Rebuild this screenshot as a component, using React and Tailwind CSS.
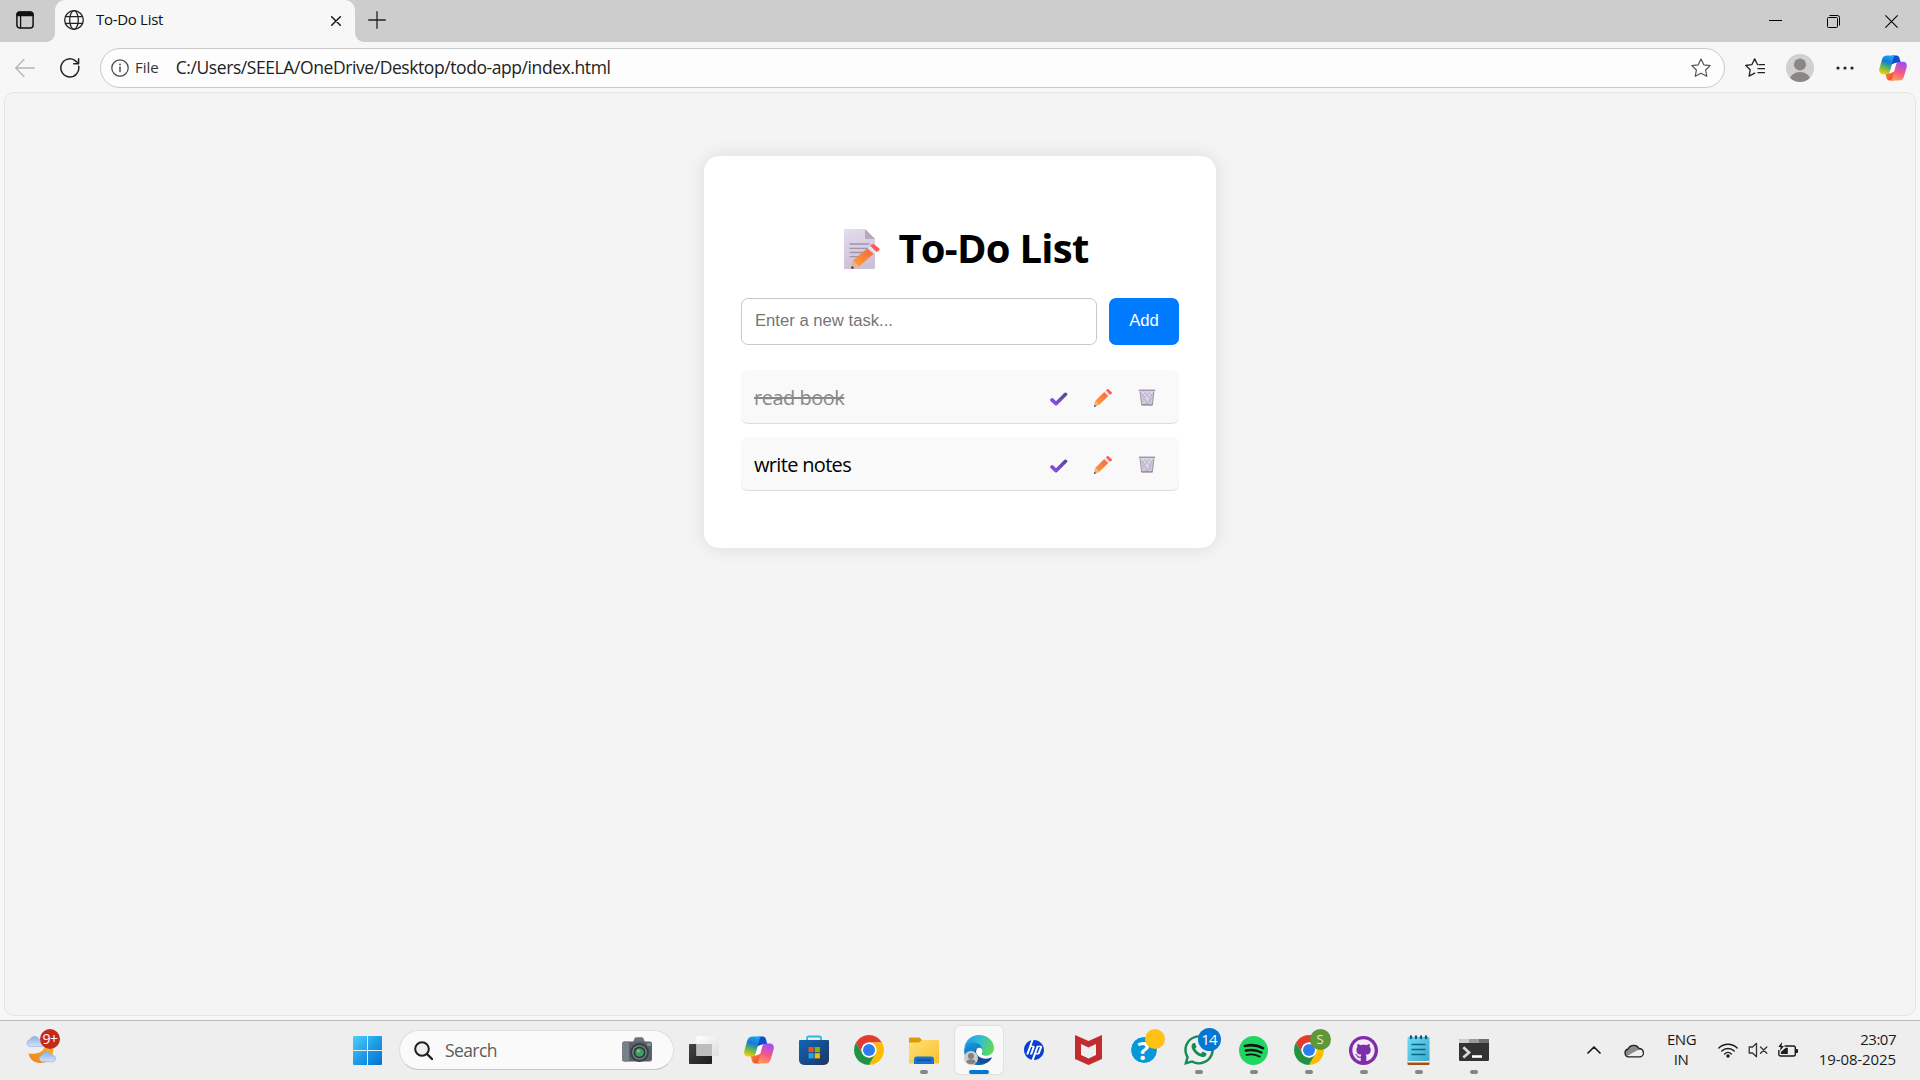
import React, { useState } from "react";
import { FaWhatsapp, FaGithub } from "react-icons/fa";
import { SiHp } from "react-icons/si";

/* ---------- Browser chrome icons ---------- */

const stroke = {
  fill: "none",
  stroke: "currentColor",
  strokeLinecap: "round",
  strokeLinejoin: "round",
};

function WorkspaceIcon() {
  return (
    <svg className="h-[18px] w-[18px]" viewBox="0 0 18 18">
      <rect x="0.9" y="1" width="16.2" height="16" rx="3" fill="none" stroke="#111" strokeWidth="1.5" />
      <path d="M0.5 5.2V4a3.4 3.4 0 0 1 3.4-3.4h10.2A3.4 3.4 0 0 1 17.5 4v1.2z" fill="#111" />
      <path d="M4.6 5v12" stroke="#111" strokeWidth="1.3" />
    </svg>
  );
}

function GlobeIcon() {
  return (
    <svg className="h-5 w-5 text-[#222]" viewBox="0 0 20 20" {...stroke} strokeWidth="1.3">
      <circle cx="10" cy="10" r="9.3" />
      <ellipse cx="10" cy="10" rx="4.3" ry="9.3" />
      <path d="M1.5 6.7h17M1.5 13.3h17" />
    </svg>
  );
}

function StarPath({ cut }) {
  return cut ? (
    <path d="M12.6 6.7 9.7.9 6.8 6.7.7 7.5l4.5 4.3-1.1 6.3 5.6-3" />
  ) : (
    <path d="M10 1l2.8 5.8 6.4.8-4.6 4.4 1.2 6.3L10 15.2l-5.8 3.1 1.2-6.3L.8 7.6l6.4-.8z" />
  );
}

function CopilotIcon({ id, className }) {
  const half =
    "M8.6.5H18c-1.2.3-2 1.2-2.4 2.6L12 16.6c-.8 2.9-2.3 4-4.6 4H4.2C.7 20.6-.4 17.9.4 14.5L3.3 4.6C4.2 1.7 5.9.5 8.6.5z";
  const fold = "M14.2.5h4.600c1.800 0 2.600.9 3.200 2.900l1.500 5h-3.700c-2 0-3 .2-4.300 1l-3 1z";
  return (
    <svg className={className} viewBox="0 0 30 28">
      <defs>
        <linearGradient id={id + "a"} x1="0.6" y1="0" x2="0.3" y2="1">
          <stop offset="0" stopColor="#17a5f3" />
          <stop offset="0.35" stopColor="#1878d8" />
          <stop offset="0.62" stopColor="#52b45f" />
          <stop offset="1" stopColor="#ffcb00" />
        </linearGradient>
        <linearGradient id={id + "b"} x1="0.4" y1="1" x2="0.7" y2="0">
          <stop offset="0" stopColor="#ff9c55" />
          <stop offset="0.45" stopColor="#f2568b" />
          <stop offset="1" stopColor="#9d50f5" />
        </linearGradient>
        <linearGradient id={id + "c"} x1="0" y1="0" x2="1" y2="0.5">
          <stop offset="0" stopColor="#1b3fc0" />
          <stop offset="1" stopColor="#0a56cf" />
        </linearGradient>
        <linearGradient id={id + "d"} x1="0" y1="0" x2="1" y2="1">
          <stop offset="0" stopColor="#e8402c" />
          <stop offset="1" stopColor="#ff8a3c" />
        </linearGradient>
      </defs>
      <path d="M14.500 8.500h5l-4 11h-5z" fill="#fff" />
      <path d={fold} fill={`url(#${id}c)`} />
      <g transform="rotate(180 15 14)">
        <path d={fold} fill={`url(#${id}d)`} />
      </g>
      <path d={half} fill={`url(#${id}a)`} />
      <path
        d="M21.400 27.500H12c1.200-.3 2-1.200 2.400-2.600L18 11.400c.8-2.900 2.300-4 4.600-4h3.200c3.500 0 4.600 2.700 3.800 6.100l-2.900 9.900c-.9 2.900-2.600 4.100-5.300 4.100z"
        fill={`url(#${id}b)`}
      />
    </svg>
  );
}

/* ---------- To-do app icons ---------- */

function PencilShape() {
  return (
    <>
      <path d="M1 12 5 16 .9 17.700c-.5.200-.9-.2-.7-.7z" fill="#e8b08c" />
      <path d="M.5 15.800l1.500 1.500-1.300.500c-.4.100-.7-.1-.6-.5z" fill="#4a2340" />
      <path d="M1.100 11.900 10.300 3l4 4-9.200 9z" fill="url(#pencilBody)" />
      <path d="M10.300 3 12 1.300l4 4-1.700 1.700z" fill="#e9dcf0" />
      <path d="M12 1.300 13 .4c.5-.5 1.100-.5 1.600 0l2.900 2.700c.5.500.5 1.100 0 1.600l-1.500 1.100z" fill="#fa5a50" />
    </>
  );
}

function PencilDefs() {
  return (
    <defs>
      <linearGradient id="pencilBody" x1="0" y1="1" x2="1" y2="0">
        <stop offset="0" stopColor="#ffa03c" />
        <stop offset="1" stopColor="#f8653e" />
      </linearGradient>
    </defs>
  );
}

function MemoIcon() {
  return (
    <svg className="mt-0.5 h-10 w-9" viewBox="0 0 36 40">
      <PencilDefs />
      <defs>
        <linearGradient id="paper" x1="0" y1="0" x2="0.2" y2="1">
          <stop offset="0" stopColor="#e4dbec" />
          <stop offset="1" stopColor="#cdc1d8" />
        </linearGradient>
      </defs>
      <path d="M1 0h20l10 10v29a1 1 0 0 1-1 1H1a1 1 0 0 1-1-1V1a1 1 0 0 1 1-1z" fill="url(#paper)" />
      <path d="M21 0l10 10h-9a1 1 0 0 1-1-1z" fill="#b5abb9" />
      <path d="M5.500 15h20M5.500 19.300h20M5.500 23.500h16M5.500 27.700h11" stroke="#a195a8" strokeWidth="1.300" />
      <g transform="translate(7 15) scale(1.600 1.390)">
        <PencilShape />
      </g>
    </svg>
  );
}

function CheckIcon() {
  return (
    <svg className="mt-[3px] h-[14px] w-[18px]" viewBox="0 0 18 14">
      <defs>
        <linearGradient id="check" x1="0" y1="1" x2="1" y2="0">
          <stop offset="0" stopColor="#8a4be8" />
          <stop offset="1" stopColor="#5b4a93" />
        </linearGradient>
      </defs>
      <path
        d="M2 7.900 6 11.700 15.500 2.300"
        fill="none"
        stroke="url(#check)"
        strokeWidth="3.600"
        strokeLinecap="round"
        strokeLinejoin="round"
      />
    </svg>
  );
}

function PencilIcon() {
  return (
    <svg className="h-[18px] w-[18px]" viewBox="0 0 18 18">
      <PencilDefs />
      <PencilShape />
    </svg>
  );
}

function TrashIcon() {
  return (
    <svg className="h-[17px] w-[18px]" viewBox="0 0 18 17">
      <path d="M2 3h14l-1.700 13.500H3.700z" fill="#dcd6e6" />
      <path
        d="M3 4l3.500 4-2 4 3.500 4M7 3.500 4 8l5 6-2 2M7 3.500l5 6-3 6M11 3.500 6.500 9l4 6.500M11 3.500l3.500 4.500-3 5 2 3M15 4l-3.500 5.500 2 4"
        fill="none"
        stroke="#b3abc1"
        strokeWidth="0.800"
      />
      <path d="M2.200 3 3.700 16M15.800 3l-1.500 13" stroke="#a39bb0" strokeWidth="1.200" />
      <path d="M3.500 15.900h11" stroke="#8f879c" strokeWidth="1.400" />
      <rect x="0.700" y="0.400" width="16.600" height="2.200" rx="0.600" fill="#b3adc0" />
      <path d="M1 1.400h16" stroke="#938ca2" strokeWidth="0.700" />
    </svg>
  );
}

/* ---------- Taskbar icons ---------- */

function WeatherIcon() {
  return (
    <svg className="h-[30px] w-8" viewBox="0 0 32 30">
      <defs>
        <linearGradient id="cloud" x1="0" y1="0" x2="0" y2="1">
          <stop offset="0" stopColor="#8fb0e6" />
          <stop offset="1" stopColor="#d4e2f8" />
        </linearGradient>
        <linearGradient id="moon" x1="0" y1="1" x2="1" y2="0">
          <stop offset="0" stopColor="#f07e1a" />
          <stop offset="1" stopColor="#f5b52e" />
        </linearGradient>
      </defs>
      <path d="M2.500 18.500c8 1 15-1 16-7l8.500 1c1.500 8-4 15.500-13 15.500-6 0-10.500-4-11.500-9.500z" fill="url(#moon)" />
      <path
        d="M3.500 11.500a3.500 3.500 0 0 1 .4-6.800 5 5 0 0 1 9.300-.3c3.300 0 5 2 5 4 0 1.900-1.300 3.100-3 3.100z"
        fill="url(#cloud)"
        stroke="#8aaae0"
        strokeWidth="0.600"
      />
      <path
        d="M15.500 26.700a3.400 3.400 0 0 1 .3-6.500 4.700 4.700 0 0 1 8.800-.4c3.100.100 5 1.600 5 3.700 0 1.800-1.300 3.200-3 3.200z"
        fill="url(#cloud)"
        stroke="#8aaae0"
        strokeWidth="0.600"
      />
    </svg>
  );
}

function WindowsIcon() {
  return (
    <svg className="h-[29px] w-[29px]" viewBox="0 0 29 29">
      <defs>
        <linearGradient id="win" gradientUnits="userSpaceOnUse" x1="0" y1="0" x2="29" y2="29">
          <stop offset="0" stopColor="#4fd0fd" />
          <stop offset="0.500" stopColor="#1f9ce8" />
          <stop offset="1" stopColor="#0072d0" />
        </linearGradient>
      </defs>
      <path
        d="M1 0h13v14H0V1a1 1 0 0 1 1-1zM15 0h13a1 1 0 0 1 1 1v13H15zM0 15h14v14H1a1 1 0 0 1-1-1zM15 15h14v13a1 1 0 0 1-1 1H15z"
        fill="url(#win)"
      />
    </svg>
  );
}

function CameraIcon() {
  return (
    <svg className="h-[26px] w-[30px]" viewBox="0 0 30 26">
      <path d="M11 5l1.500-3.500C13 .5 14 .3 15 .3h4c1 0 2 .2 2.500 1.200L23 5z" fill="#6b737b" />
      <rect x="0" y="4.500" width="30" height="20" rx="2.500" fill="#59616a" />
      <path d="M2.500 4.500H7v20H2.500A2.500 2.500 0 0 1 0 22V7a2.500 2.500 0 0 1 2.500-2.500z" fill="#78818a" />
      <rect x="25" y="6" width="4" height="3" rx="1" fill="#8a939b" />
      <circle cx="17.500" cy="15.500" r="9.500" fill="#3a4047" />
      <circle cx="17.500" cy="15.500" r="7.300" fill="#7d868d" />
      <circle cx="17.500" cy="15.500" r="6" fill="#2c3637" />
      <circle cx="17.500" cy="15.500" r="4.300" fill="#3f9d66" />
      <circle cx="16.300" cy="14" r="1.500" fill="#7cc796" />
    </svg>
  );
}

function TaskViewIcon() {
  return (
    <svg className="h-7 w-[30px]" viewBox="0 0 30 28">
      <defs>
        <linearGradient id="tvDark" x1="0" y1="0" x2="1" y2="1">
          <stop offset="0" stopColor="#444" />
          <stop offset="1" stopColor="#1c1c1c" />
        </linearGradient>
        <linearGradient id="tvLight" x1="0" y1="0" x2="1" y2="1">
          <stop offset="0" stopColor="#fff" />
          <stop offset="1" stopColor="#dedede" />
        </linearGradient>
      </defs>
      <rect x="0" y="8" width="23" height="20" rx="0.800" fill="url(#tvDark)" />
      <rect x="7.500" y="0.300" width="22.200" height="19.700" rx="0.800" fill="url(#tvLight)" />
      <path d="M7.500 8H23v12H7.500z" fill="#bdbdbd" />
    </svg>
  );
}

function StoreIcon() {
  return (
    <svg className="h-[30px] w-[30px]" viewBox="0 0 30 30">
      <defs>
        <linearGradient id="store" x1="0" y1="0" x2="1" y2="1">
          <stop offset="0" stopColor="#0f66b8" />
          <stop offset="1" stopColor="#1f355e" />
        </linearGradient>
      </defs>
      <path d="M8 6V3.200A1.700 1.700 0 0 1 9.700 1.500h10.600A1.700 1.700 0 0 1 22 3.200V6" fill="none" stroke="#27b8ef" strokeWidth="1.800" />
      <path d="M1 5h28a1 1 0 0 1 1 1v19a5 5 0 0 1-5 5H5a5 5 0 0 1-5-5V6a1 1 0 0 1 1-1z" fill="url(#store)" />
      <path d="M9.500 12h5.200v5.200H9.500z" fill="#f25022" />
      <path d="M15.700 12h5.200v5.200h-5.200z" fill="#7fba00" />
      <path d="M9.500 18.200h5.200v5.200H9.500z" fill="#11a9f0" />
      <path d="M15.700 18.200h5.200v5.200h-5.200z" fill="#ffb900" />
    </svg>
  );
}

function ChromeIcon() {
  return (
    <svg className="h-[30px] w-[30px]" viewBox="0 0 24 24">
      <path d="M12 6H22.390A12 12 0 0 0 1.610 6L6.800 15A6 6 0 0 1 12 6z" fill="#e33b2e" />
      <path d="M17.200 15 12 24A12 12 0 0 0 22.390 6H12A6 6 0 0 1 17.200 15z" fill="#fdbd00" />
      <path d="M6.800 15 1.610 6A12 12 0 0 0 12 24L17.200 15A6 6 0 0 1 6.800 15z" fill="#229342" />
      <circle cx="12" cy="12" r="6" fill="#fff" />
      <circle cx="12" cy="12" r="4.800" fill="#2f7cf0" />
    </svg>
  );
}

function ExplorerIcon() {
  return (
    <svg className="h-[27px] w-[30px]" viewBox="0 0 30 27">
      <defs>
        <linearGradient id="folder" x1="0" y1="0" x2="1" y2="1">
          <stop offset="0" stopColor="#ffe07a" />
          <stop offset="1" stopColor="#fbbf2a" />
        </linearGradient>
      </defs>
      <path d="M1 .5h9.500L13 3v5H0V1.500a1 1 0 0 1 1-1z" fill="#dd9a05" />
      <path d="M0 5.500h10L13 3h16a1 1 0 0 1 1 1v22.500H0z" fill="url(#folder)" />
      <path d="M5 27v-4.500a3 3 0 0 1 3-3h14a3 3 0 0 1 3 3V27z" fill="#1173cf" />
      <path d="M8.500 23.200h13" stroke="#0a4a94" strokeWidth="1.200" strokeLinecap="round" />
    </svg>
  );
}

function EdgeIcon() {
  return (
    <svg className="h-[30px] w-[30px]" viewBox="0 0 30 30">
      <defs>
        <linearGradient id="edgeTop" x1="0" y1="0.300" x2="1" y2="0.600">
          <stop offset="0" stopColor="#1f9fdc" />
          <stop offset="0.450" stopColor="#30bdd6" />
          <stop offset="1" stopColor="#62dc4f" />
        </linearGradient>
        <linearGradient id="edgeLeft" x1="0.300" y1="0" x2="0.700" y2="1">
          <stop offset="0" stopColor="#1a94df" />
          <stop offset="1" stopColor="#0d5cab" />
        </linearGradient>
      </defs>
      <path
        d="M.3 12.500C1.700 5 7.600 0 15 0c8.700 0 15 6.200 15 13 0 4.900-3.700 7.700-7.700 7.700-3.500 0-5.400-1.200-4.700-2.500.8-1.200 1-3.700-.8-5.700-4.300-4.700-12-5-16.500 0z"
        fill="url(#edgeTop)"
      />
      <path
        d="M.1 15.500C.3 10.500 4.300 7.200 9.300 7.200c5 0 9 3.600 9.100 8-1.200-3.400-5.700-3.700-6.200 2-.5 6.300 4 11.300 9.500 11.200C12 33 0 27.500.1 15.500z"
        fill="url(#edgeLeft)"
      />
      <path
        d="M11.800 14c-2.600 8.500 3.500 15.800 9.700 14.600 2.900-1.200 5-3.100 6.200-5.300.3-.5-.1-.9-.6-.7C19 26 11.300 21.500 12.300 15z"
        fill="#124c92"
      />
      <path d="M12.200 17c-.3-4 3.500-5.400 5.300-3.300 1.200 1.500.9 3.500 0 4.700-.6 1.300.8 2.600 3.500 2.800-4.500 1.500-8.500-1-8.800-4.200z" fill="#fff" />
    </svg>
  );
}

function McAfeeIcon() {
  return (
    <svg className="h-[30px] w-[27px]" viewBox="0 0 27 30">
      <path
        d="M0 0l13.500 6L27 0v24l-13.500 6L0 24zm6 9v11l7.500 3.500L21 20V9l-7.500 3.500z"
        fill="#c22c2f"
        fillRule="evenodd"
      />
    </svg>
  );
}

function HelpIcon() {
  return (
    <div className="relative flex h-7 w-7 items-center justify-center rounded-full border border-white bg-[#0a97d8]">
      <span className="text-[25px] leading-none font-bold text-white">?</span>
      <span className="absolute -top-[8px] left-[14px] h-5 w-5 rounded-full bg-[#ffc114]" />
    </div>
  );
}

function SpotifyIcon() {
  return (
    <svg className="h-[29px] w-[29px]" viewBox="0 0 29 29">
      <circle cx="14.500" cy="14.500" r="14.500" fill="#1ed760" />
      <g fill="none" stroke="#111" strokeLinecap="round">
        <path d="M6 10c6-1.400 12.500-.8 18 2.100" strokeWidth="2.700" />
        <path d="M6.700 14.600c5.500-1.200 11-.6 15.800 1.900" strokeWidth="2.300" />
        <path d="M7.400 18.900c4.800-1 9.300-.4 13.300 1.700" strokeWidth="1.900" />
      </g>
    </svg>
  );
}

function NotepadIcon() {
  return (
    <svg className="h-[30px] w-[23px]" viewBox="0 0 23 30">
      <defs>
        <linearGradient id="note" x1="0" y1="0" x2="1" y2="1">
          <stop offset="0" stopColor="#6fdcf5" />
          <stop offset="1" stopColor="#3ba9cb" />
        </linearGradient>
      </defs>
      <rect x="0.500" y="25" width="22" height="5" rx="1" fill="#a34f10" />
      <rect x="0.500" y="24" width="22" height="3.500" fill="#fff" />
      <rect x="0.500" y="2" width="22" height="24" rx="1" fill="url(#note)" />
      <path d="M4 1.500v1.500M9 1.500v1.500M14 1.500v1.500M19 1.500v1.500" stroke="#0b5d7d" strokeWidth="2.400" strokeLinecap="round" />
      <path d="M4.500 9.500h14M4.500 14.500h14M4.500 19.500h14" stroke="#0b6587" strokeWidth="1.500" />
    </svg>
  );
}

function TerminalIcon() {
  return (
    <svg className="h-[22px] w-[30px]" viewBox="0 0 30 22">
      <rect width="30" height="22" rx="1.200" fill="#333" />
      <path d="M1.200 0H10v4H0V1.200A1.200 1.200 0 0 1 1.200 0z" fill="#cfcfcf" />
      <path d="M10 0h10v4H10z" fill="#9b9b9b" />
      <path d="M20 0h8.800A1.200 1.200 0 0 1 30 1.200V4H20z" fill="#6f6f6f" />
      <path d="M4.300 8.300 10 13.500l-5.700 5" fill="none" stroke="#d6d6d6" strokeWidth="2.800" />
      <path d="M13 17.500h10" stroke="#fff" strokeWidth="2.600" />
    </svg>
  );
}

function WifiIcon() {
  return (
    <svg className="h-4 w-5 text-[#1b1b1b]" viewBox="0 0 20 16" {...stroke} strokeWidth="1.400">
      <path d="M.8 6a13 13 0 0 1 18.400 0M3.800 9a8.800 8.800 0 0 1 12.400 0M6.700 11.900a4.700 4.700 0 0 1 6.600 0" />
      <circle cx="10" cy="14" r="1.700" fill="currentColor" stroke="none" />
    </svg>
  );
}

function MutedIcon() {
  return (
    <svg className="h-4 w-5 text-[#333]" viewBox="0 0 20 16" {...stroke} strokeWidth="1.300">
      <path d="M8.500 1.300 4.500 5H1.200v6h3.300l4 3.700z" />
      <path d="M12.500 5l6.300 6.300M18.800 5l-6.300 6.300" />
    </svg>
  );
}

function BatteryIcon() {
  return (
    <svg className="h-4 w-5" viewBox="0 0 20 16">
      <path
        d="M6.500 4h9A1.800 1.800 0 0 1 17.300 5.800v6.400a1.800 1.800 0 0 1-1.800 1.800h-13A1.800 1.800 0 0 1 .8 12.200V8"
        fill="none"
        stroke="#1b1b1b"
        strokeWidth="1.400"
      />
      <path d="M18 7h1a1 1 0 0 1 1 1v2a1 1 0 0 1-1 1h-1z" fill="#1b1b1b" />
      <path d="M2.800 12V10l5-4.200h2V12z" fill="#1b1b1b" />
      <path d="M4 0 .3 5h2.300L2 9l4-5H3.600z" fill="#1b1b1b" />
    </svg>
  );
}

function CloudIcon() {
  return (
    <svg className="h-[15px] w-5" viewBox="0 0 20 15">
      <path d="M4.700 13.900A4 4 0 0 1 4.200 6 6 6 0 0 1 15 5.500a4.200 4.200 0 0 1 .5 8.400z" fill="#8c8c8c" />
      <path d="M3 13l10-5.500c4-2 6.300.5 6 3.500-.3 2-1.500 2.900-3.500 2.900H5z" fill="#efefef" />
      <path
        d="M4.700 13.900A4 4 0 0 1 4.200 6 6 6 0 0 1 15 5.500a4.200 4.200 0 0 1 .5 8.400z"
        fill="none"
        stroke="#222"
        strokeWidth="1.300"
      />
    </svg>
  );
}

/* ---------- Sections ---------- */

function TabStrip() {
  return (
    <div className="flex h-[42px] bg-[#f7f7f7]">
      <div className="flex w-[55px] rounded-br-[9px] bg-[#cdcdcd] pt-[11px] pl-4">
        <WorkspaceIcon />
      </div>
      <div className="w-[300px] bg-[#cdcdcd]">
        <div className="flex h-[42px] items-center rounded-t-[10px] bg-[#f7f7f7] pr-[14px] pb-0.5 pl-[9px]">
          <GlobeIcon />
          <span className="ml-3 pb-0.5 text-[15px] tracking-[-0.300px] text-[#111]">To-Do List</span>
          <svg className="mt-px ml-auto h-2.5 w-2.5 text-[#111]" viewBox="0 0 10 10" {...stroke} strokeWidth="1.400">
            <path d="M.7.700l8.600 8.600M9.300.700.7 9.300" />
          </svg>
        </div>
      </div>
      <div className="flex flex-1 items-center rounded-bl-[9px] bg-[#cdcdcd] pr-[22px] pb-0.5 pl-[13px]">
        <svg className="h-[18px] w-[18px] text-[#222]" viewBox="0 0 18 18" {...stroke} strokeWidth="1.300">
          <path d="M9 .7v16.600M.700 9h16.600" />
        </svg>
        <div className="ml-auto flex items-center gap-[45px] pt-[3px] text-black">
          <svg className="h-[13px] w-[13px]" viewBox="0 0 13 13">
            <path d="M0 5.500h13" stroke="currentColor" />
          </svg>
          <svg className="h-[13px] w-[13px]" viewBox="0 0 13 13" fill="none" stroke="currentColor">
            <rect x="0.500" y="2.500" width="10" height="10" rx="1" />
            <path d="M2.500.500h8a2 2 0 0 1 2 2v8" />
          </svg>
          <svg className="h-[13px] w-[13px]" viewBox="0 0 13 13">
            <path d="M.4.400l12.200 12.200M12.600.400.4 12.600" stroke="currentColor" strokeWidth="1.100" />
          </svg>
        </div>
      </div>
    </div>
  );
}

function Toolbar() {
  return (
    <div className="flex h-[50px] items-center bg-[#f7f7f7] pt-[1px] pr-[13px] pl-[15px]">
      <svg className="h-5 w-5 text-[#b5b5b5]" viewBox="0 0 20 20" {...stroke} strokeWidth="1.300">
        <path d="M19.300 10H.8M9 1.500.7 10 9 18.500" />
      </svg>
      <svg className="ml-[25px] h-5 w-5 text-[#222]" viewBox="0 0 20 20" {...stroke} strokeWidth="1.500">
        <path d="M18.700 8.300A9 9 0 1 1 14.800 2.400L18.600 5.500M18.600.8v4.900h-4.900" />
      </svg>
      <div className="ml-5 flex h-10 w-[1625px] items-center rounded-full border border-[#c9c9c9] bg-[#fdfdfd] pr-[13px] pl-[10px]">
        <svg className="h-[18px] w-[18px] text-[#444]" viewBox="0 0 18 18" {...stroke} strokeWidth="1.200">
          <circle cx="9" cy="9" r="8.200" />
          <path d="M9 8.300v4.200" strokeWidth="1.400" />
          <circle cx="9" cy="5.500" r="0.900" fill="currentColor" stroke="none" />
        </svg>
        <span className="ml-1.5 text-[15px] text-[#333]">File</span>
        <span className="ml-[17px] text-[17.500px] tracking-[-0.420px] text-[#222]">
          C:/Users/SEELA/OneDrive/Desktop/todo-app/index.html
        </span>
        <svg className="ml-auto h-5 w-5 text-[#555]" viewBox="0 0 20 20" {...stroke} strokeWidth="1.200">
          <StarPath />
        </svg>
      </div>
      <svg className="ml-5 h-5 w-5 text-[#222]" viewBox="0 0 20 20" {...stroke} strokeWidth="1.300">
        <StarPath cut />
        <path d="M14 6.700h5.500M13 10.700h6.500M13 14.700h6.500" />
      </svg>
      <svg className="ml-[21px] h-7 w-7" viewBox="0 0 28 28">
        <defs>
          <clipPath id="avatar">
            <circle cx="14" cy="14" r="14" />
          </clipPath>
        </defs>
        <g clipPath="url(#avatar)">
          <rect width="28" height="28" fill="#d2d0ce" />
          <circle cx="14" cy="10.500" r="6" fill="#8a8886" />
          <ellipse cx="14" cy="26.500" rx="10.500" ry="8.500" fill="#8a8886" />
        </g>
      </svg>
      <svg className="ml-[22px] h-1 w-[18px] text-[#222]" viewBox="0 0 18 4" fill="currentColor">
        <circle cx="2" cy="2" r="1.600" />
        <circle cx="9" cy="2" r="1.600" />
        <circle cx="16" cy="2" r="1.600" />
      </svg>
      <CopilotIcon id="copTop" className="ml-auto h-[26px] w-7" />
    </div>
  );
}

function TaskRow({ task, onToggle, onDelete }) {
  return (
    <li className="flex h-[54px] items-center rounded-[7px] border-b border-[#dcdcdc] bg-[#f9f9f9] pt-[2px] pr-[23px] pl-[13px]">
      <span
        className={
          task.done
            ? "mr-auto text-[20px] tracking-[-0.500px] text-[#888] line-through decoration-2"
            : "mr-auto text-[20px] tracking-[-0.680px] text-black"
        }
      >
        {task.text}
      </span>
      <div className="flex items-center gap-[26px]">
        <button onClick={onToggle}>
          <CheckIcon />
        </button>
        <button>
          <PencilIcon />
        </button>
        <button onClick={onDelete}>
          <TrashIcon />
        </button>
      </div>
    </li>
  );
}

function TodoCard() {
  const [tasks, setTasks] = useState([
    { id: 1, text: "read book", done: true },
    { id: 2, text: "write notes", done: false },
  ]);
  const toggle = (id) => setTasks(tasks.map((t) => (t.id === id ? { ...t, done: !t.done } : t)));
  const remove = (id) => setTasks(tasks.filter((t) => t.id !== id));
  return (
    <section className="mx-auto mt-[63px] h-[392px] w-[512px] rounded-[15px] bg-white px-[37px] pt-[65px] shadow-[0_0_19px_rgba(0,0,0,0.100)]">
      <h1 className="flex h-[54px] items-center justify-center pl-[13px] text-[40px] font-bold tracking-[-0.750px] text-black">
        <MemoIcon />
        <span className="ml-[18px]">To-Do List</span>
      </h1>
      <div className="mt-[23px] flex h-[47px] gap-3">
        <input
          className="w-[356px] rounded-[7px] border border-[#c8c8c8] bg-white px-[13px] pb-[1px] font-['Liberation_Sans',sans-serif] text-[16.670px] outline-none placeholder:text-[#757575]"
          placeholder="Enter a new task..."
        />
        <button className="w-[70px] rounded-[7px] bg-[#007bff] pb-[3px] font-['Liberation_Sans',sans-serif] text-[16.670px] text-white">
          Add
        </button>
      </div>
      <ul className="mt-[25px] flex flex-col gap-[13px]">
        {tasks.map((t) => (
          <TaskRow key={t.id} task={t} onToggle={() => toggle(t.id)} onDelete={() => remove(t.id)} />
        ))}
      </ul>
    </section>
  );
}

function AppCell({ children, running, active }) {
  return (
    <div className="flex w-[55px] justify-center">
      <div
        className={
          active
            ? "relative flex h-12 w-12 items-center justify-center rounded-[5px] bg-[#f8f8f8] shadow-[0_0_1px_1px_rgba(0,0,0,0.060)]"
            : "relative flex h-12 w-12 items-center justify-center"
        }
      >
        {children}
        {running && <span className="absolute bottom-0 h-1 w-2 rounded-full bg-[#868686]" />}
        {active && <span className="absolute bottom-0 h-1 w-5 rounded-full bg-[#0078d4]" />}
      </div>
    </div>
  );
}

function Taskbar() {
  return (
    <footer className="flex h-[60px] items-center border-t border-[#bcbcbc] bg-[#eeeeee] pb-px">
      <div className="w-[340px] pl-[26px]">
        <div className="relative w-8">
          <WeatherIcon />
          <span className="absolute -top-[6px] left-[14px] flex h-5 w-5 items-center justify-center rounded-full bg-[#c42b1c] text-[14px] leading-none tracking-[-0.500px] text-white">
            9+
          </span>
        </div>
      </div>
      <div className="flex w-[55px] justify-center">
        <WindowsIcon />
      </div>
      <div className="ml-1 flex h-10 w-[275px] items-center rounded-full border border-[#dedede] border-b-[#c6c6c6] bg-[#fafafa] pr-[21px] pl-[14px]">
        <svg className="h-[19px] w-[19px] text-[#1f1f1f]" viewBox="0 0 19 19" {...stroke} strokeWidth="2">
          <circle cx="8" cy="8" r="6.800" fill="#f0f0f0" />
          <path d="M13 13l5 5" strokeWidth="2.400" />
        </svg>
        <span className="ml-3 text-[17.500px] tracking-[-0.600px] text-[#5c5c5c]">Search</span>
        <span className="ml-auto">
          <CameraIcon />
        </span>
      </div>
      <div className="ml-[2px] flex">
        <AppCell>
          <TaskViewIcon />
        </AppCell>
        <AppCell>
          <CopilotIcon id="copBar" className="h-7 w-[30px]" />
        </AppCell>
        <AppCell>
          <StoreIcon />
        </AppCell>
        <AppCell>
          <ChromeIcon />
        </AppCell>
        <AppCell running>
          <ExplorerIcon />
        </AppCell>
        <AppCell active>
          <EdgeIcon />
          <svg className="absolute top-[25px] left-[9px] h-[14px] w-[14px]" viewBox="0 0 14 14">
            <circle cx="7" cy="7" r="7" fill="#cfcdcb" />
            <circle cx="7" cy="5" r="3.100" fill="#85837f" />
            <path d="M2.500 11.500a4.500 3.200 0 0 1 9 0A7 7 0 0 1 7 13.200a7 7 0 0 1-4.500-1.700z" fill="#85837f" />
          </svg>
        </AppCell>
        <AppCell>
          <span className="rounded-full bg-white">
            <SiHp className="h-5 w-5 text-[#0a3fd6]" />
          </span>
        </AppCell>
        <AppCell>
          <McAfeeIcon />
        </AppCell>
        <AppCell>
          <HelpIcon />
        </AppCell>
        <AppCell running>
          <FaWhatsapp className="h-[34px] w-[34px] text-[#178a55]" />
          <span className="absolute top-[2px] left-[23px] flex h-[23px] w-[23px] items-center justify-center rounded-full bg-[#0078d4] pb-px text-[15px] leading-none tracking-[-0.800px] text-white">
            14
          </span>
        </AppCell>
        <AppCell running>
          <SpotifyIcon />
        </AppCell>
        <AppCell running>
          <ChromeIcon />
          <span className="absolute top-[3px] left-[25px] flex h-[21px] w-[21px] items-center justify-center rounded-full bg-[#5f9636] text-[13px] leading-none text-white/80">
            S
          </span>
        </AppCell>
        <AppCell running>
          <span className="flex h-[29px] w-[29px] items-center justify-center rounded-full bg-[#7d2ea8]">
            <FaGithub className="h-[23px] w-[23px] text-[#f3eaf7]" />
          </span>
        </AppCell>
        <AppCell running>
          <NotepadIcon />
        </AppCell>
        <AppCell running>
          <TerminalIcon />
        </AppCell>
      </div>
      <div className="ml-auto flex items-center pr-6 text-[15px] leading-5 text-[#1b1b1b]">
        <svg className="h-2 w-[14px]" viewBox="0 0 14 8" {...stroke} strokeWidth="1.700">
          <path d="M1 7l6-6 6 6" />
        </svg>
        <span className="ml-[23px]">
          <CloudIcon />
        </span>
        <div className="ml-[23px] w-7 pb-0.5 text-center tracking-[-0.500px]">
          <p>ENG</p>
          <p>IN</p>
        </div>
        <div className="ml-[23px] flex items-center gap-[10px]">
          <WifiIcon />
          <MutedIcon />
          <BatteryIcon />
        </div>
        <div className="ml-[20px] w-[78px] pb-[3px] text-right">
          <p className="tracking-[-0.500px]">23:07</p>
          <p className="tracking-[-0.100px] whitespace-nowrap">19-08-2025</p>
        </div>
      </div>
    </footer>
  );
}

export default function App() {
  return (
    <div className="flex h-[1080px] w-[1920px] flex-col overflow-hidden bg-[#f7f7f7] font-['Open_Sans',sans-serif]">
      <TabStrip />
      <Toolbar />
      <main className="mx-1 h-[924px] rounded-[10px] border border-[#e4e4e4] bg-[#f4f4f4]">
        <TodoCard />
      </main>
      <div className="flex-1" />
      <Taskbar />
    </div>
  );
}
